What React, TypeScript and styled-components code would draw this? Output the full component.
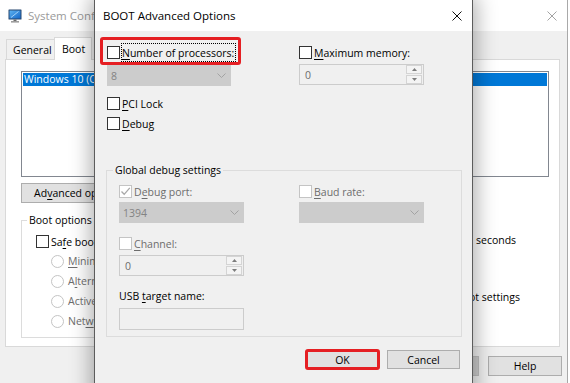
import React from "react";
import styled, { createGlobalStyle } from "styled-components";

const FONT = `"Open Sans", "Noto Sans", "Liberation Sans", sans-serif`;

const GlobalStyle = createGlobalStyle`
  html, body { margin: 0; padding: 0; background: #ffffff; }
  body { font-family: ${FONT}; font-size: 10.5px; color: #000; }
  #root { width: 570px; height: 383px; position: relative; overflow: hidden; }
  *, *::before, *::after { box-sizing: border-box; }
`;

/* ---------- shared controls ---------- */

const Access = styled.u`
  text-decoration: underline;
  text-underline-offset: 2px;
  text-decoration-thickness: 1px;
`;

const CheckRow = styled.div<{ $disabled?: boolean; $mt?: number }>`
  display: flex;
  align-items: center;
  gap: 1px;
  height: 19px;
  margin-top: ${(p) => p.$mt ?? 0}px;
  white-space: nowrap;
  color: ${(p) => (p.$disabled ? "#6d6d6d" : "#000")};
`;

const Highlight = styled.div`
  align-self: flex-start;
  position: relative;
  &::after {
    content: "";
    position: absolute;
    top: -6px;
    bottom: -3px;
    left: -7px;
    right: -5px;
    border: 3px solid #e51f23;
    border-radius: 3px;
    pointer-events: none;
  }
`;

const Box = styled.span<{ $disabled?: boolean }>`
  width: 13px;
  height: 13px;
  flex: none;
  border: 1px solid ${(p) => (p.$disabled ? "#c4c4c4" : "#333333")};
  background: #ffffff;
  display: flex;
  align-items: center;
  justify-content: center;
`;

const Round = styled(Box)`
  border-radius: 50%;
  border-color: #c4c4c4;
`;

const Caption = styled.span<{ $focused?: boolean }>`
  display: inline-flex;
  align-items: center;
  height: 19px;
  padding-right: 1px;
  border: 1px dotted ${(p) => (p.$focused ? "#000" : "transparent")};
`;

const Combo = styled.div<{ $w: number; $mt?: number }>`
  width: ${(p) => p.$w}px;
  height: 21px;
  margin-top: ${(p) => p.$mt ?? 0}px;
  background: #cccccc;
  border: 1px solid #cccccc;
  color: #838383;
  display: flex;
  align-items: center;
  padding: 0 4px 0 3px;
  svg { margin-left: auto; }
`;

const Edit = styled.div<{ $w: number; $h?: number; $mt?: number }>`
  width: ${(p) => p.$w}px;
  height: ${(p) => p.$h ?? 21}px;
  margin-top: ${(p) => p.$mt ?? 0}px;
  background: #f0f0f0;
  border: 1px solid #cccccc;
  color: #6d6d6d;
  display: flex;
  align-items: center;
  padding: 0 1px 0 5px;
  flex: none;
`;

const SpinButtons = styled.div`
  margin-left: auto;
  width: 16px;
  height: 19px;
  display: flex;
  flex-direction: column;
  gap: 1px;
`;

const SpinHalf = styled.span`
  flex: 1;
  border: 1px solid #d4d4d4;
  background: #f4f4f4;
  display: flex;
  align-items: center;
  justify-content: center;
`;

const PushButton = styled.div<{ $w: number; $h?: number; $disabled?: boolean; $marked?: boolean }>`
  width: ${(p) => p.$w}px;
  height: ${(p) => p.$h ?? 19}px;
  flex: none;
  background: ${(p) => (p.$disabled ? "#cccccc" : "#e1e1e1")};
  border: 1px solid ${(p) => (p.$disabled ? "#bfbfbf" : "#adadad")};
  color: ${(p) => (p.$disabled ? "#838383" : "#000")};
  display: flex;
  align-items: center;
  justify-content: center;
  white-space: nowrap;
  outline: ${(p) => (p.$marked ? "3px solid #e51f23" : "none")};
  outline-offset: -2px;
  border-radius: ${(p) => (p.$marked ? "2px" : "0")};
`;

const Label = styled.div<{ $mt?: number; $disabled?: boolean }>`
  height: 16px;
  line-height: 16px;
  margin-top: ${(p) => p.$mt ?? 0}px;
  white-space: nowrap;
  color: ${(p) => (p.$disabled ? "#6d6d6d" : "#000")};
`;

const Group = styled.fieldset<{ $mt: number; $w?: number; $pl: number }>`
  margin: ${(p) => p.$mt}px 0 0 0;
  padding: 4px 0 6px ${(p) => p.$pl}px;
  border: 1px solid #dcdcdc;
  min-width: 0;
  width: ${(p) => (p.$w ? `${p.$w}px` : "auto")};
  flex: none;
`;

const Legend = styled.legend<{ $shift: number }>`
  padding: 0 2px;
  margin-left: ${(p) => p.$shift}px;
  line-height: 16px;
  height: 16px;
  white-space: nowrap;
`;

const Chevron = () => (
  <svg width="9" height="5" viewBox="0 0 9 5">
    <polyline points="0.5,0.5 4.5,4.5 8.5,0.5" fill="none" stroke="#a3a3a3" strokeWidth="1" />
  </svg>
);

const Tick = () => (
  <svg width="11" height="11" viewBox="0 0 11 11">
    <polyline points="1.5,5.5 4.2,8.3 9.8,1.8" fill="none" stroke="#a8a8a8" strokeWidth="1.3" />
  </svg>
);

const Spin = () => (
  <SpinButtons>
    <SpinHalf>
      <svg width="5" height="3" viewBox="0 0 5 3">
        <polygon points="0,3 2.5,0 5,3" fill="#7c7c7c" />
      </svg>
    </SpinHalf>
    <SpinHalf>
      <svg width="5" height="3" viewBox="0 0 5 3">
        <polygon points="0,0 5,0 2.5,3" fill="#7c7c7c" />
      </svg>
    </SpinHalf>
  </SpinButtons>
);

type CheckProps = {
  children: React.ReactNode;
  disabled?: boolean;
  checked?: boolean;
  focused?: boolean;
  mt?: number;
};

const Check = ({ children, disabled, checked, focused, mt }: CheckProps) => (
  <CheckRow $disabled={disabled} $mt={mt}>
    <Box $disabled={disabled}>{checked && <Tick />}</Box>
    <Caption $focused={focused}>{children}</Caption>
  </CheckRow>
);

const RadioRow = styled.div`
  display: flex;
  align-items: center;
  gap: 4px;
  height: 20px;
  margin-left: 15px;
  color: #6d6d6d;
  white-space: nowrap;
`;

const Radio = ({ children }: { children: React.ReactNode }) => (
  <RadioRow>
    <Round $disabled />
    <span>{children}</span>
  </RadioRow>
);

/* ---------- background window (System Configuration) ---------- */

const BgWindow = styled.div`
  width: 568px;
  height: 383px;
  background: #f0f0f0;
  border-right: 1px solid #a9a9a9;
  display: flex;
  flex-direction: column;
`;

const TitleBar = styled.div<{ $inactive?: boolean; $size: number }>`
  height: 31px;
  flex: none;
  background: #ffffff;
  display: flex;
  align-items: center;
  padding-left: 8px;
  font-size: ${(p) => p.$size}px;
  color: ${(p) => (p.$inactive ? "#9a9a9a" : "#000")};
  white-space: nowrap;
`;

const AppIcon = styled.svg`
  margin-right: 6px;
  flex: none;
`;

const CloseBox = styled.div`
  margin-left: auto;
  width: 30px;
  height: 31px;
  display: flex;
  align-items: center;
  justify-content: center;
  flex: none;
`;

const BgBody = styled.div`
  flex: 1;
  display: flex;
  flex-direction: column;
  padding: 6px 5px 0 5px;
`;

const TabStrip = styled.div`
  height: 22px;
  display: flex;
  align-items: flex-end;
  padding-left: 1px;
  flex: none;
`;

const Tab = styled.div<{ $active?: boolean; $w: number }>`
  width: ${(p) => p.$w}px;
  height: ${(p) => (p.$active ? 23 : 20)}px;
  margin-bottom: ${(p) => (p.$active ? -1 : 0)}px;
  margin-left: ${(p) => (p.$active ? -1 : 0)}px;
  background: ${(p) => (p.$active ? "#ffffff" : "#f0f0f0")};
  border: 1px solid #d9d9d9;
  border-bottom: none;
  display: flex;
  align-items: center;
  padding-left: ${(p) => (p.$active ? 7 : 6)}px;
  position: relative;
  z-index: ${(p) => (p.$active ? 1 : 0)};
`;

const TabPanel = styled.div`
  height: 288px;
  margin-right: 2px;
  background: #ffffff;
  border: 1px solid #d9d9d9;
  padding: 11px 10px 0 15px;
  display: flex;
  flex-direction: column;
  flex: none;
`;

const ListBox = styled.div`
  height: 106px;
  border: 1px solid #828790;
  padding: 1px;
  flex: none;
`;

const ListItem = styled.div<{ $selected?: boolean }>`
  height: 13px;
  line-height: 13px;
  padding-left: 1px;
  background: ${(p) => (p.$selected ? "#0078d7" : "transparent")};
  color: ${(p) => (p.$selected ? "#ffffff" : "#000")};
  white-space: nowrap;
  overflow: hidden;
`;

const ButtonRow = styled.div<{ $mt: number; $end?: boolean; $gap: number; $pr?: number }>`
  display: flex;
  gap: ${(p) => p.$gap}px;
  margin-top: ${(p) => p.$mt}px;
  justify-content: ${(p) => (p.$end ? "flex-end" : "flex-start")};
  padding-right: ${(p) => p.$pr ?? 0}px;
  flex: none;
`;

const LowerRow = styled.div`
  display: flex;
  gap: 12px;
  align-items: flex-start;
`;

const TimeoutColumn = styled.div`
  margin-top: 27px;
  display: flex;
  flex-direction: column;
  white-space: nowrap;
`;

const TimeoutRow = styled.div`
  display: flex;
  align-items: center;
  gap: 6px;
  height: 20px;
`;

const TimeoutField = styled.div`
  width: 67px;
  height: 20px;
  flex: none;
  background: #ffffff;
  border: 1px solid #7a7a7a;
`;

const PermanentRow = styled.div`
  display: flex;
  align-items: flex-start;
  gap: 3px;
  margin: 40px 0 0 -6px;
  line-height: 15px;
  ${Box} { margin-top: 1px; }
`;

/* ---------- foreground dialog ---------- */

const Dialog = styled.div`
  position: absolute;
  left: 94px;
  top: -1px;
  width: 379px;
  height: 400px;
  border: 1px solid #5c5c5c;
  background: #f0f0f0;
  box-shadow: 0 0 20px 3px rgba(0, 0, 0, 0.33);
  display: flex;
  flex-direction: column;
  z-index: 2;
`;

const DialogBody = styled.div`
  flex: 1;
  display: flex;
  flex-direction: column;
  padding: 12px 10px 0 11px;
`;

const TwoCols = styled.div<{ $first: number; $pl?: number }>`
  display: grid;
  grid-template-columns: ${(p) => p.$first}px 1fr;
  padding-left: ${(p) => p.$pl ?? 0}px;
`;

const Col = styled.div`
  display: flex;
  flex-direction: column;
  align-items: flex-start;
`;

const CloseX = ({ color }: { color: string }) => (
  <svg width="10" height="10" viewBox="0 0 10 10">
    <path d="M0.5 0.5 L9.5 9.5 M9.5 0.5 L0.5 9.5" stroke={color} strokeWidth="1" fill="none" />
  </svg>
);

export default function App() {
  return (
    <>
      <GlobalStyle />
      <BgWindow>
        <TitleBar $inactive $size={11.5}>
          <AppIcon width="14" height="14" viewBox="0 0 14 14">
            <defs>
              <linearGradient id="scr" x1="0" y1="0" x2="1" y2="1">
                <stop offset="0" stopColor="#5db3f2" />
                <stop offset="1" stopColor="#1466c8" />
              </linearGradient>
            </defs>
            <rect x="0.5" y="0.5" width="13" height="10" rx="0.5" fill="#27466e" />
            <rect x="1.5" y="1.5" width="11" height="8" fill="url(#scr)" />
            <path d="M3 8.5 L10.5 2.5" stroke="#bfe3ff" strokeWidth="0.8" />
            <rect x="5.5" y="10.5" width="3" height="1.5" fill="#6d6d6d" />
            <rect x="3" y="12" width="8" height="1.6" fill="#9d9d9d" />
          </AppIcon>
          System Configuration
          <CloseBox>
            <CloseX color="#a3a3a3" />
          </CloseBox>
        </TitleBar>
        <BgBody>
          <TabStrip>
            <Tab $w={49}>General</Tab>
            <Tab $w={38} $active>
              Boot
            </Tab>
          </TabStrip>
          <TabPanel>
            <ListBox>
              <ListItem $selected>Windows 10 (C:\Windows)</ListItem>
            </ListBox>
            <ButtonRow $mt={6} $gap={7}>
              <PushButton $w={122} $h={20}>
                Ad<Access>v</Access>anced options...
              </PushButton>
            </ButtonRow>
            <LowerRow>
              <Group $mt={9} $w={370} $pl={14}>
                <Legend $shift={-9}>Boot options</Legend>
                <CheckRow>
                  <Box />
                  <Caption>
                    Sa<Access>f</Access>e boot
                  </Caption>
                </CheckRow>
                <Radio>
                  <Access>M</Access>inimal
                </Radio>
                <Radio>
                  A<Access>l</Access>ternate shell
                </Radio>
                <Radio>Active Directory repair</Radio>
                <Radio>
                  Net<Access>w</Access>ork
                </Radio>
              </Group>
              <TimeoutColumn>
                <TimeoutRow>
                  <TimeoutField />
                  <span>seconds</span>
                </TimeoutRow>
                <PermanentRow>
                  <Box />
                  <span>Make all boot settings</span>
                </PermanentRow>
              </TimeoutColumn>
            </LowerRow>
          </TabPanel>
          <ButtonRow $mt={9} $gap={9} $end>
            <PushButton $w={74} $h={20} $disabled>
              <Access>A</Access>pply
            </PushButton>
            <PushButton $w={74} $h={20}>
              Help
            </PushButton>
          </ButtonRow>
        </BgBody>
      </BgWindow>

      <Dialog>
        <TitleBar $size={11.5}>
          BOOT Advanced Options
          <CloseBox>
            <CloseX color="#111111" />
          </CloseBox>
        </TitleBar>
        <DialogBody>
          <TwoCols $first={192} $pl={1}>
            <Col>
              <Highlight>
                <Check focused>
                  <Access>N</Access>umber of processors:
                </Check>
              </Highlight>
              <Combo $w={124} $mt={3}>
                8
                <Chevron />
              </Combo>
              <Check mt={8}>
                <Access>P</Access>CI Lock
              </Check>
              <Check mt={1}>
                <Access>D</Access>ebug
              </Check>
            </Col>
            <Col>
              <Check>
                <Access>M</Access>aximum memory:
              </Check>
              <Edit $w={125} $mt={2}>
                0
                <Spin />
              </Edit>
            </Col>
          </TwoCols>

          <Group $mt={29} $pl={12}>
            <Legend $shift={-6}>Global debug settings</Legend>
            <TwoCols $first={180}>
              <Col>
                <Check disabled checked>
                  D<Access>e</Access>bug port:
                </Check>
                <Combo $w={125} $mt={1}>
                  1394
                  <Chevron />
                </Combo>
                <Check disabled mt={11}>
                  <Access>C</Access>hannel:
                </Check>
                <Edit $w={125} $mt={2}>
                  0
                  <Spin />
                </Edit>
                <Label $mt={12}>
                  USB <Access>t</Access>arget name:
                </Label>
                <Edit $w={125} $h={22} $mt={4} />
              </Col>
              <Col>
                <Check disabled>
                  <Access>B</Access>aud rate:
                </Check>
                <Combo $w={125} $mt={1}>
                  <Chevron />
                </Combo>
              </Col>
            </TwoCols>
          </Group>

          <ButtonRow $mt={13} $gap={8} $end $pr={2}>
            <PushButton $w={73} $marked>
              OK
            </PushButton>
            <PushButton $w={73}>Cancel</PushButton>
          </ButtonRow>
        </DialogBody>
      </Dialog>
    </>
  );
}
